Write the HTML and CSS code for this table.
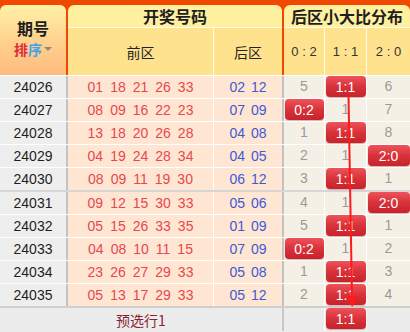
FILE: index.html
```html
<!DOCTYPE html>
<html lang="zh">
<head>
<meta charset="utf-8">
<title>后区小大比分布</title>
<link rel="stylesheet" href="styles.css">
</head>
<body>
<div class="board">
  <div class="head">
    <div class="h-period">
      <div class="h-title">期号</div>
      <div class="sort"><span class="s1">排</span><span class="s2">序</span><span class="tri"></span></div>
    </div>
    <div class="h-group">
      <div class="h-top">开奖号码</div>
      <div class="h-sub draw-sub"><div>前区</div><div>后区</div></div>
    </div>
    <div class="h-group">
      <div class="h-top">后区小大比分布</div>
      <div class="h-sub dist-sub"><div>0 : 2</div><div>1 : 1</div><div>2 : 0</div></div>
    </div>
  </div>

  <div class="row">
    <div class="c-period">24026</div>
    <div class="c-front"><span>01</span><span>18</span><span>21</span><span>26</span><span>33</span></div>
    <div class="c-back"><span>02</span><span>12</span></div>
    <div class="c-d">5</div><div class="c-d"><span class="badge">1:1</span></div><div class="c-d">6</div>
  </div>
  <div class="row">
    <div class="c-period">24027</div>
    <div class="c-front"><span>08</span><span>09</span><span>16</span><span>22</span><span>23</span></div>
    <div class="c-back"><span>07</span><span>09</span></div>
    <div class="c-d"><span class="badge">0:2</span></div><div class="c-d">1</div><div class="c-d">7</div>
  </div>
  <div class="row">
    <div class="c-period">24028</div>
    <div class="c-front"><span>13</span><span>18</span><span>20</span><span>26</span><span>28</span></div>
    <div class="c-back"><span>04</span><span>08</span></div>
    <div class="c-d">1</div><div class="c-d"><span class="badge">1:1</span></div><div class="c-d">8</div>
  </div>
  <div class="row">
    <div class="c-period">24029</div>
    <div class="c-front"><span>04</span><span>19</span><span>24</span><span>28</span><span>34</span></div>
    <div class="c-back"><span>04</span><span>05</span></div>
    <div class="c-d">2</div><div class="c-d">1</div><div class="c-d"><span class="badge">2:0</span></div>
  </div>
  <div class="row">
    <div class="c-period">24030</div>
    <div class="c-front"><span>08</span><span>09</span><span>11</span><span>19</span><span>30</span></div>
    <div class="c-back"><span>06</span><span>12</span></div>
    <div class="c-d">3</div><div class="c-d"><span class="badge">1:1</span></div><div class="c-d">1</div>
  </div>
  <div class="row sep">
    <div class="c-period">24031</div>
    <div class="c-front"><span>09</span><span>12</span><span>15</span><span>30</span><span>33</span></div>
    <div class="c-back"><span>05</span><span>06</span></div>
    <div class="c-d">4</div><div class="c-d">1</div><div class="c-d"><span class="badge">2:0</span></div>
  </div>
  <div class="row">
    <div class="c-period">24032</div>
    <div class="c-front"><span>05</span><span>15</span><span>26</span><span>33</span><span>35</span></div>
    <div class="c-back"><span>01</span><span>09</span></div>
    <div class="c-d">5</div><div class="c-d"><span class="badge">1:1</span></div><div class="c-d">1</div>
  </div>
  <div class="row">
    <div class="c-period">24033</div>
    <div class="c-front"><span>04</span><span>08</span><span>10</span><span>11</span><span>15</span></div>
    <div class="c-back"><span>07</span><span>09</span></div>
    <div class="c-d"><span class="badge">0:2</span></div><div class="c-d">1</div><div class="c-d">2</div>
  </div>
  <div class="row">
    <div class="c-period">24034</div>
    <div class="c-front"><span>23</span><span>26</span><span>27</span><span>29</span><span>33</span></div>
    <div class="c-back"><span>05</span><span>08</span></div>
    <div class="c-d">1</div><div class="c-d"><span class="badge">1:1</span></div><div class="c-d">3</div>
  </div>
  <div class="row">
    <div class="c-period">24035</div>
    <div class="c-front"><span>05</span><span>13</span><span>17</span><span>29</span><span>33</span></div>
    <div class="c-back"><span>05</span><span>12</span></div>
    <div class="c-d">2</div><div class="c-d"><span class="badge">1:1</span></div><div class="c-d">4</div>
  </div>
  <div class="row pre">
    <div class="c-pre">预选行1</div>
    <div class="c-d"></div><div class="c-d"><span class="badge">1:1</span></div><div class="c-d"></div>
  </div>

  <svg class="trend" width="410" height="332" viewBox="0 0 410 332">
    <line x1="348.5" y1="96" x2="352" y2="298" stroke="#ff1a1a" stroke-width="2"/>
    <polygon points="346,296 358,296 352.2,307" fill="#ff1a1a"/>
  </svg>
</div>
</body>
</html>
```

FILE: styles.css
```css
* { box-sizing: border-box; }
html, body { margin: 0; padding: 0; }
body {
  width: 410px;
  height: 332px;
  overflow: hidden;
  background: #ececec;
  font-family: "Liberation Sans", Arial, "Noto Sans CJK SC", sans-serif;
}
.board { position: relative; width: 410px; }

/* header */
.head {
  display: grid;
  grid-template-columns: 66px 214px 126px;
  column-gap: 2px;
  padding-top: 5px;
  background: #f04800;
  height: 75px;
}
.h-period {
  border-radius: 6px 6px 0 0;
  background: linear-gradient(#fff1a6, #ffd08c 55%, #ffbb7e);
  display: flex;
  flex-direction: column;
  align-items: center;
  padding-top: 14px;
  font-family: "Noto Sans CJK SC", sans-serif;
}
.h-title { font-size: 16px; font-weight: 700; color: #1e1e1e; line-height: 18px; }
.sort { display: flex; align-items: center; font-size: 14px; font-weight: 700; line-height: 16px; margin-top: 4px; }
.s1 { color: #e02c3a; }
.s2 { color: #3ca2f0; }
.tri {
  width: 0; height: 0;
  border-left: 4px solid transparent;
  border-right: 4px solid transparent;
  border-top: 4px solid #8a8a8a;
  margin-left: 2px;
}
.h-group {
  border-radius: 6px 6px 0 0;
  overflow: hidden;
  display: flex;
  flex-direction: column;
  font-family: "Noto Sans CJK SC", sans-serif;
}
.h-top {
  height: 23px;
  background: #fff0a0;
  border-bottom: 1px solid #fffbe8;
  display: flex;
  align-items: center;
  justify-content: center;
  font-size: 16px;
  font-weight: 700;
  color: #1e1e1e;
}
.h-sub { flex: 1; display: grid; background: #fffbe8; column-gap: 1px; }
.h-sub > div {
  background: #ffe28e;
  display: flex;
  align-items: center;
  justify-content: center;
  color: #222;
}
.draw-sub { grid-template-columns: 145px 68px; }
.draw-sub > div { font-size: 14px; }
.dist-sub { grid-template-columns: 40px 41px 43px; }
.dist-sub > div { font-family: "Liberation Sans", Arial, sans-serif; font-size: 13px; color: #333; }

/* rows */
.row {
  display: grid;
  grid-template-columns: 66px 147px 69px 42px 42px 44px;
  height: 23px;
  border-top: 1px solid #ffffff;
}
.row.sep { border-top: 2px solid #d6d6d6; height: 24px; }
.row > div { display: flex; align-items: center; justify-content: center; }
.c-period { background: #eeeeee; color: #1e1e1e; font-size: 14px; }
.c-front {
  background: #ffe6d2;
  border-left: 2px solid #c2c2c2;
  color: #e8474f;
  font-size: 14px;
  gap: 7px;
}
.c-back {
  background: #ffe6d2;
  border-left: 1px solid #ffffff;
  color: #3d5bd3;
  font-size: 14px;
  gap: 6px;
}
.c-d {
  background: #f5f0e5;
  border-left: 1px solid #ffffff;
  color: #9a9a9a;
  font-size: 14px;
}
.row > .c-d:nth-child(4) { border-left: 2px solid #c2c2c2; }
.row > div.c-d { align-items: flex-start; padding-top: 2px; }
.row > div.c-d:has(.badge) { padding-top: 0; }

.badge {
  display: flex;
  align-items: center;
  justify-content: center;
  width: calc(100% - 1px);
  height: 21px;
  border-radius: 4px;
  background: linear-gradient(#ee5359, #d8323a 50%, #c8232c);
  color: #ffffff;
  font-size: 14px;
  box-shadow: 0 1px 1px rgba(120, 0, 0, 0.25);
}

.row.pre {
  grid-template-columns: 282px 42px 42px 44px;
  border-top: 2px solid #cfcfcf;
  height: 25px;
}
.c-pre {
  background: #ececec;
  color: #8a1f33;
  font-size: 14px;
  font-family: "Noto Sans CJK SC", sans-serif;
}
.row.pre .c-d { background: #ececec; }
.row.pre > .c-d:nth-child(2) { border-left: 2px solid #c8c8c8; }
.row.pre > .c-d:nth-child(4) { border-left: 1px solid #f6f6f6; }

.trend { position: absolute; left: 0; top: 0; pointer-events: none; }
```
